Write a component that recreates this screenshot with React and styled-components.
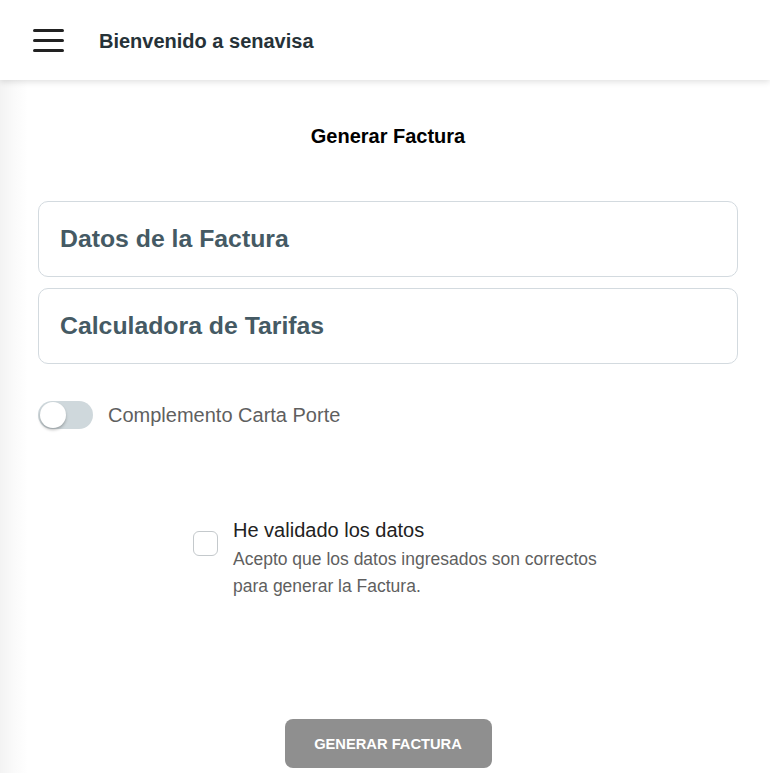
import React, { useState } from "react";
import styled, { createGlobalStyle } from "styled-components";

const FONT = `"Liberation Sans", Arial, sans-serif`;

const Global = createGlobalStyle`
  html, body { margin: 0; padding: 0; background: #fff; }
  body { font-family: ${FONT}; }
  * { box-sizing: border-box; }
`;

const Page = styled.div`
  width: 770px;
  height: 773px;
  overflow: hidden;
  display: flex;
  flex-direction: column;
  font-family: ${FONT};
  background: linear-gradient(to right, #f3f3f3 0px, #fafafa 14px, #ffffff 28px);
`;

const Header = styled.header`
  height: 80px;
  flex-shrink: 0;
  display: flex;
  align-items: center;
  gap: 35px;
  padding-left: 33px;
  background: #fff;
  box-shadow: 0 2px 6px rgba(0, 0, 0, 0.12);
  position: relative;
  z-index: 1;
`;

const Burger = styled.button`
  width: 31px;
  height: 23px;
  margin-top: 1px;
  padding: 0;
  border: 0;
  background: none;
  display: flex;
  flex-direction: column;
  justify-content: space-between;
  cursor: pointer;
  span {
    display: block;
    height: 3px;
    border-radius: 2px;
    background: #222;
  }
`;

const HeaderTitle = styled.h1`
  margin: 2px 0 0;
  font-size: 20px;
  font-weight: 700;
  color: #263238;
  font-family: ${FONT};
`;

const Main = styled.main`
  flex: 1;
  display: flex;
  flex-direction: column;
  padding: 45px 32px 0 38px;
`;

const PageTitle = styled.h2`
  margin: 0 0 54px;
  text-align: center;
  font-size: 20px;
  font-weight: 700;
  color: #000;
  line-height: 22px;
  font-family: ${FONT};
`;

const Cards = styled.div`
  display: flex;
  flex-direction: column;
  gap: 11px;
`;

const Card = styled.div`
  height: 76px;
  border: 1px solid #d3dadf;
  border-radius: 10px;
  display: flex;
  align-items: center;
  padding-left: 21px;
  background: #fff;
`;

const CardTitle = styled.h3`
  margin: 0;
  font-size: 24.8px;
  font-weight: 700;
  color: #455a64;
  font-family: ${FONT};
`;

const ToggleRow = styled.label`
  margin-top: 37px;
  display: flex;
  align-items: center;
  gap: 15px;
  cursor: pointer;
`;

const Track = styled.span`
  width: 55px;
  height: 28px;
  border-radius: 14px;
  background: ${(p) => (p.$on ? "#90a4ae" : "#cfd8dc")};
  position: relative;
  flex-shrink: 0;
`;

const Thumb = styled.span`
  position: absolute;
  top: 1px;
  left: ${(p) => (p.$on ? "28px" : "2px")};
  width: 26px;
  height: 26px;
  border-radius: 50%;
  background: #fff;
  box-shadow: 0 2px 3px rgba(0, 0, 0, 0.25);
`;

const ToggleLabel = styled.span`
  font-size: 20px;
  color: #5f5f5f;
`;

const CheckRow = styled.label`
  margin-top: 88px;
  padding-left: 155px;
  display: flex;
  gap: 15px;
  align-items: flex-start;
  cursor: pointer;
`;

const Box = styled.span`
  width: 25px;
  height: 25px;
  margin-top: 14px;
  border: 1px solid #c4c9cc;
  border-radius: 6px;
  background: #fff;
  flex-shrink: 0;
  display: flex;
  align-items: center;
  justify-content: center;
  color: #455a64;
  font-size: 16px;
`;

const CheckText = styled.span`
  display: flex;
  flex-direction: column;
  gap: 3px;
`;

const CheckTitle = styled.span`
  font-size: 20px;
  color: #222;
  line-height: 26px;
`;

const CheckDesc = styled.span`
  font-size: 17.5px;
  color: #5f5f5f;
  line-height: 27px;
`;

const ButtonWrap = styled.div`
  margin-top: auto;
  padding-bottom: 5px;
  display: flex;
  justify-content: center;
`;

const Button = styled.button`
  width: 207px;
  height: 49px;
  border: 0;
  border-radius: 8px;
  background: #8f8f8f;
  color: #fff;
  font-family: ${FONT};
  font-size: 14.7px;
  font-weight: 700;
  text-transform: uppercase;
  cursor: pointer;
`;

export default function App() {
  const [on, setOn] = useState(false);
  const [checked, setChecked] = useState(false);
  return (
    <Page>
      <Global />
      <Header>
        <Burger aria-label="menu">
          <span />
          <span />
          <span />
        </Burger>
        <HeaderTitle>Bienvenido a senavisa</HeaderTitle>
      </Header>
      <Main>
        <PageTitle>Generar Factura</PageTitle>
        <Cards>
          <Card>
            <CardTitle>Datos de la Factura</CardTitle>
          </Card>
          <Card>
            <CardTitle>Calculadora de Tarifas</CardTitle>
          </Card>
        </Cards>
        <ToggleRow onClick={() => setOn(!on)}>
          <Track $on={on}>
            <Thumb $on={on} />
          </Track>
          <ToggleLabel>Complemento Carta Porte</ToggleLabel>
        </ToggleRow>
        <CheckRow onClick={() => setChecked(!checked)}>
          <Box>{checked ? "✓" : ""}</Box>
          <CheckText>
            <CheckTitle>He validado los datos</CheckTitle>
            <CheckDesc>
              Acepto que los datos ingresados son correctos
              <br />
              para generar la Factura.
            </CheckDesc>
          </CheckText>
        </CheckRow>
        <ButtonWrap>
          <Button disabled={!checked}>Generar Factura</Button>
        </ButtonWrap>
      </Main>
    </Page>
  );
}
